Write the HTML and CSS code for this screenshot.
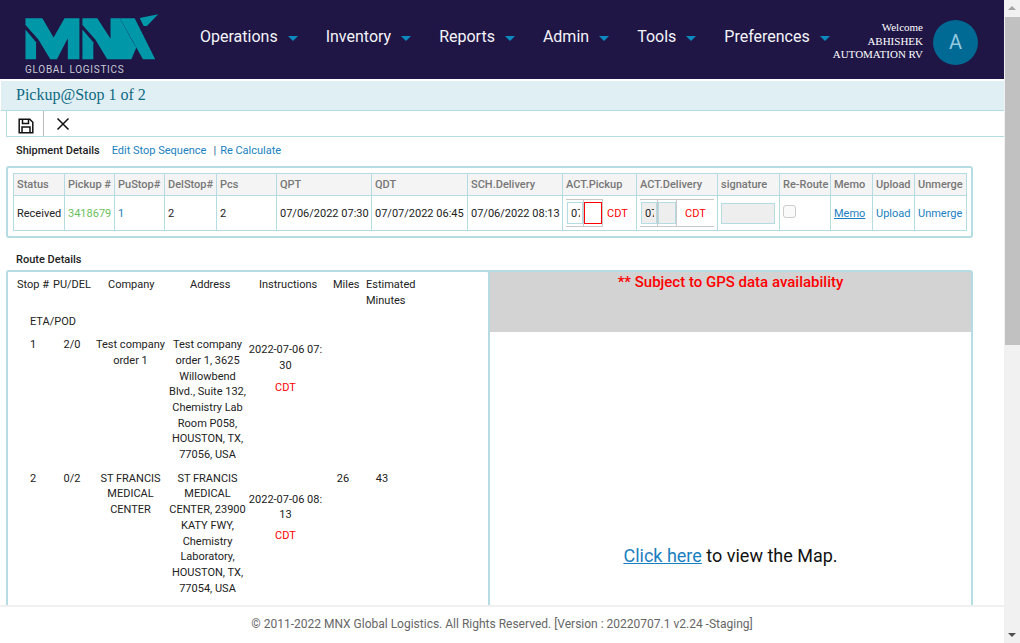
FILE: index.html
```html
<!DOCTYPE html>
<html lang="en">

<head>
    <meta charset="UTF-8">
    <meta name="viewport" content="width=device-width, initial-scale=1.0">
    <title>Pickup@Stop 1 of 2</title>

    <link rel="stylesheet" href="styles.css">

</head>

<body>
    <div class="app">
        <div class="page">
            <!-- Top navigation -->
            <header class="topbar">
                <div class="brand">
                    <svg class="brand-mark" viewBox="15 12 402 142" width="134" height="47">
                        <polygon points="15,62 47,100 47,152 15,152" />
                        <polygon points="15,28 66,28 100,86 133,28 178,28 178,152 143,152 143,88 110,152 90,152 54,92 15,48" />
                        <polygon points="187,62 220,100 220,152 187,152" />
                        <polygon points="187,28 232,28 272,90 272,28 300,28 340,100 350,116 335,152 262,152 226,92 187,48" />
                        <polygon points="300,28 345,28 407,152 370,152" />
                        <polygon points="360,27 416,16 382,51 372,51" />
                    </svg>
                    <span class="brand-name">GLOBAL LOGISTICS</span>
                </div>
                <nav class="menu">
                    <a class="menu-item">Operations<i class="caret"></i></a>
                    <a class="menu-item">Inventory<i class="caret"></i></a>
                    <a class="menu-item">Reports<i class="caret"></i></a>
                    <a class="menu-item">Admin<i class="caret"></i></a>
                    <a class="menu-item">Tools<i class="caret"></i></a>
                    <a class="menu-item">Preferences<i class="caret"></i></a>
                </nav>
                <div class="welcome">Welcome<br>ABHISHEK<br>AUTOMATION RV</div>
                <div class="avatar">A</div>
            </header>

            <main class="content">
                <div class="title-bar">Pickup@Stop 1 of 2</div>

                <div class="toolbar">
                    <button class="tool-btn tool-save" title="Save">
                        <svg viewBox="0 0 16 16" width="16" height="16" fill="none" stroke="#111" stroke-width="1.5">
                            <path d="M1.2 1.2h10.6l3 3v10.6H1.2z" />
                            <path d="M4.5 1.2v4.3h6V1.2" />
                            <path d="M4 14.8V9h8v5.8" />
                        </svg>
                    </button>
                    <button class="tool-btn tool-close" title="Close">
                        <svg viewBox="0 0 14 14" width="14" height="14" fill="none" stroke="#111" stroke-width="1.5">
                            <path d="M1.5 1.5l11 11M12.5 1.5l-11 11" />
                        </svg>
                    </button>
                </div>

                <div class="links-row">
                    <b class="label">Shipment Details</b>
                    <a class="link link-edit">Edit Stop Sequence</a>
                    <span class="link-sep">|</span>
                    <a class="link">Re Calculate</a>
                </div>

                <!-- Shipment table -->
                <section class="panel">
                    <table class="shipment">
                        <colgroup>
                            <col class="w51"><col class="w50"><col class="w50"><col class="w52"><col class="w60">
                            <col class="w95"><col class="w96"><col class="w95"><col class="w74"><col class="w81">
                            <col class="w62"><col class="w51"><col class="w42"><col class="w42"><col class="w52">
                        </colgroup>
                        <thead>
                            <tr>
                                <th>Status</th>
                                <th>Pickup #</th>
                                <th>PuStop#</th>
                                <th>DelStop#</th>
                                <th>Pcs</th>
                                <th>QPT</th>
                                <th>QDT</th>
                                <th>SCH.Delivery</th>
                                <th>ACT.Pickup</th>
                                <th>ACT.Delivery</th>
                                <th>signature</th>
                                <th>Re-Route</th>
                                <th>Memo</th>
                                <th>Upload</th>
                                <th>Unmerge</th>
                            </tr>
                        </thead>
                        <tbody>
                            <tr>
                                <td>Received</td>
                                <td class="green">3418679</td>
                                <td class="blue">1</td>
                                <td>2</td>
                                <td>2</td>
                                <td>07/06/2022 07:30</td>
                                <td>07/07/2022 06:45</td>
                                <td>07/06/2022 08:13</td>
                                <td>
                                    <div class="picker picker-pickup">
                                        <span class="cell cell-date"><input class="date-input" type="text" value="07/06/2022"></span>
                                        <span class="cell cell-time"><input class="time-input time-error" type="text"></span>
                                        <span class="zone">CDT</span>
                                    </div>
                                </td>
                                <td>
                                    <div class="picker picker-delivery">
                                        <span class="cell cell-date"><input class="date-input is-off" type="text" value="07/06/2022" disabled></span>
                                        <span class="cell cell-time"><input class="time-input is-off" type="text" disabled></span>
                                        <span class="zone">CDT</span>
                                    </div>
                                </td>
                                <td><input class="sign-input" type="text" disabled></td>
                                <td class="check-cell"><span class="check"></span></td>
                                <td><a class="memo">Memo</a></td>
                                <td class="blue">Upload</td>
                                <td class="blue">Unmerge</td>
                            </tr>
                        </tbody>
                    </table>
                </section>

                <h4 class="route-title">Route Details</h4>

                <section class="route">
                    <div class="route-list">
                        <div class="route-head">
                            <span>Stop #</span>
                            <span>PU/DEL</span>
                            <span>Company</span>
                            <span>Address</span>
                            <span>Instructions</span>
                            <span>Miles</span>
                            <span>Estimated<br>Minutes</span>
                        </div>
                        <div class="route-eta">ETA/POD</div>

                        <div class="stop">
                            <div>1</div>
                            <div>2/0</div>
                            <div>Test company order 1</div>
                            <div>Test company order 1, 3625 Willowbend Blvd., Suite 132, Chemistry Lab Room P058, HOUSTON, TX, 77056, USA</div>
                            <div class="when">2022-07-06 07:30<span class="zone">CDT</span></div>
                            <div></div>
                            <div></div>
                        </div>

                        <div class="stop">
                            <div>2</div>
                            <div>0/2</div>
                            <div>ST FRANCIS MEDICAL CENTER</div>
                            <div>ST FRANCIS MEDICAL CENTER, 23900 KATY FWY, Chemistry Laboratory, HOUSTON, TX, 77054, USA</div>
                            <div class="when when-low">2022-07-06 08:13<span class="zone">CDT</span></div>
                            <div>26</div>
                            <div>43</div>
                        </div>
                    </div>

                    <div class="route-map">
                        <div class="gps-note">** Subject to GPS data availability</div>
                        <div class="map-body"><span><a class="map-link">Click here</a> to view the Map.</span></div>
                    </div>
                </section>
            </main>

            <footer class="footer">© 2011-2022 MNX Global Logistics. All Rights Reserved. [Version : 20220707.1 v2.24 -Staging]</footer>
        </div>

        <!-- Window scrollbar -->
        <div class="scrollbar">
            <i class="arrow-up"></i>
            <div class="thumb"></div>
            <i class="arrow-down"></i>
        </div>
    </div>
</body>

</html>
```

FILE: styles.css
```css
* {
    box-sizing: border-box;
}

html,
body {
    margin: 0;
    height: 100%;
    overflow: hidden;
}

body {
    font-family: Roboto, "Liberation Sans", sans-serif;
    font-size: 11px;
    line-height: 1.42857;
    color: #222;
    background-color: #fff;
}

a {
    cursor: pointer;
}

.app {
    display: flex;
    height: 100vh;
}

.page {
    flex: 1;
    min-width: 0;
    display: flex;
    flex-direction: column;
}

/* header */
.topbar {
    flex: none;
    height: 79px;
    display: flex;
    align-items: flex-start;
    padding: 0 26px 0 25px;
    background-color: #1f1646;
    color: #fff;
}

.brand {
    width: 175px;
    padding-top: 13px;
    flex: none;
}

.brand-mark {
    display: block;
    fill: #0097a9;
}

.brand-name {
    display: block;
    margin-top: 4px;
    font-size: 10px;
    line-height: 12px;
    letter-spacing: 0.72px;
    color: #c9c9d4;
}

.menu {
    display: flex;
    gap: 28px;
    padding-top: 25px;
    flex: 1;
}

.menu-item {
    display: flex;
    align-items: center;
    font-size: 16px;
    line-height: 23px;
    color: #f4f4f8;
}

.caret {
    width: 0;
    height: 0;
    margin: 3px 0 0 10px;
    border-left: 5px solid transparent;
    border-right: 5px solid transparent;
    border-top: 5px solid #0d8ac0;
}

.welcome {
    margin: 21px 10px 0 0;
    font-family: "Liberation Serif", serif;
    font-size: 11px;
    line-height: 13.5px;
    text-align: right;
    white-space: nowrap;
}

.avatar {
    width: 45px;
    height: 45px;
    margin-top: 20px;
    border-radius: 50%;
    background-color: #006a94;
    color: #93c8e0;
    font-size: 20px;
    line-height: 45px;
    text-align: center;
}

/* page body */
.content {
    flex: 1;
    min-height: 0;
    overflow: hidden;
    padding-top: 2px;
}

.title-bar {
    height: 30px;
    margin-left: 1px;
    padding-left: 15px;
    background-color: #e0eff3;
    border-bottom: 1px solid #b5dce3;
    font-family: "Liberation Serif", serif;
    font-size: 16px;
    line-height: 28px;
    color: #0f6a84;
}

.toolbar {
    display: flex;
    height: 26px;
    margin-left: 6px;
    border-left: 1px solid #b5dce3;
    border-bottom: 1px solid #b5dce3;
}

.tool-btn {
    display: flex;
    padding: 0;
    border: none;
    background: none;
}

.tool-save {
    width: 37px;
    padding: 7px 0 0 11px;
    border-right: 1px solid #bbb;
}

.tool-close {
    padding: 6px 0 0 12px;
}

.links-row {
    display: flex;
    align-items: center;
    height: 29px;
    padding: 0 0 2px 16px;
}

.label {
    font-weight: 500;
    color: #222;
}

.link {
    color: #1a7fc0;
}

.link-edit {
    margin-left: 12px;
}

.link-sep {
    margin: 0 4px 0 7px;
    color: #1a5f90;
}

.panel {
    width: 967px;
    margin-left: 6px;
    padding: 5px;
    border: 2px solid #b5dce3;
    border-radius: 3px;
}

.shipment {
    width: 953px;
    table-layout: fixed;
    border-collapse: collapse;
}

.w42 { width: 42px; }
.w50 { width: 50px; }
.w51 { width: 51px; }
.w52 { width: 52px; }
.w60 { width: 60px; }
.w62 { width: 62px; }
.w74 { width: 74px; }
.w81 { width: 81px; }
.w95 { width: 95px; }
.w96 { width: 96px; }

.shipment th,
.shipment td {
    padding: 0 2px 0 3px;
    border: 1px solid #b5dce3;
    text-align: left;
    white-space: nowrap;
    overflow: hidden;
}

.shipment th {
    height: 22px;
    background-color: #f4f4f4;
    color: #777;
    font-weight: 500;
}

.shipment td {
    height: 35px;
    padding-top: 2px;
}

.green {
    color: #6cc05c;
}

.shipment .blue {
    color: #1a7fc0;
}

.memo {
    color: #1a7fc0;
    text-decoration: underline;
}

.zone {
    color: #f00;
}

.picker {
    display: flex;
    align-items: stretch;
    height: 28px;
    margin-top: -2px;
    border-top: 1px solid #c8c8c8;
    border-bottom: 1px solid #c8c8c8;
}

.picker-pickup {
    width: 37px;
}

.picker-delivery {
    width: 74px;
}

.cell {
    flex: none;
    display: flex;
    align-items: center;
    border-right: 1px solid #c8c8c8;
}

.cell-date {
    width: 18px;
    padding-left: 1px;
}

.cell-time {
    width: 19px;
}

.picker .zone {
    display: flex;
    align-items: center;
    flex: none;
    padding-top: 2px;
    margin-left: 4px;
}

.picker-delivery .zone {
    margin-left: 8px;
}

.date-input,
.time-input {
    flex: none;
    height: 22px;
    padding: 0 2px 0 3px;
    border: 1px solid #b5dce3;
    font: inherit;
    color: #222;
    background-color: #fff;
}

.date-input {
    width: 16px;
}

.time-input {
    width: 18px;
}

.time-error {
    border-color: #f00;
}

.is-off {
    background-color: #eee;
}

.sign-input {
    display: block;
    width: 54px;
    height: 21px;
    margin-top: -2px;
    border: 1px solid #b5dce3;
    background-color: #eee;
}

.shipment .check-cell {
    vertical-align: top;
    padding-top: 9px;
}

.check {
    display: block;
    width: 13px;
    height: 13px;
    border: 1px solid #ccc;
    border-radius: 3px;
    background-color: #fafafa;
}

.route-title {
    height: 32px;
    margin: 0;
    padding: 14px 0 0 16px;
    font-size: 11px;
    line-height: 16px;
    font-weight: 500;
}

.route {
    display: flex;
    width: 967px;
    margin-left: 6px;
}

.route-list {
    width: 484px;
    flex: none;
    padding: 5px 0 0 9px;
    border: 2px solid #b5dce3;
    border-bottom: none;
    border-radius: 3px 3px 0 0;
}

.route-head {
    display: grid;
    grid-template-columns: 36px 55px 82px 69px 74px 33px auto;
}

.route-eta {
    margin: 6px 0 7px 13px;
}

.stop {
    display: grid;
    grid-template-columns: 34px 44px 73px 81px 75px 40px 38px;
    margin-left: -1px;
    padding-bottom: 8px;
    text-align: center;
}

.when {
    padding-top: 5px;
    word-break: break-all;
}

.when-low {
    padding-top: 21px;
}

.when .zone {
    display: block;
    margin-top: 6px;
}

.when-low .zone {
    margin-top: 5px;
}

.route-map {
    flex: 1;
    margin-left: -2px;
    border: 2px solid #b5dce3;
    border-bottom: none;
    border-radius: 0 3px 0 0;
}

.gps-note {
    height: 60px;
    background-color: #d3d3d3;
    color: #f00;
    font-size: 15px;
    line-height: 20px;
    font-weight: 500;
    text-align: center;
}

.map-body {
    display: flex;
    align-items: center;
    justify-content: center;
    height: 448px;
    font-size: 18px;
    line-height: 26px;
    color: #111;
}

.map-link {
    color: #1a7fc0;
    text-decoration: underline;
}

.footer {
    flex: none;
    height: 38px;
    border-top: 2px solid #f0f0f0;
    background-color: #fff;
    color: #666;
    font-size: 12px;
    line-height: 34px;
    text-align: center;
}

/* scrollbar */
.scrollbar {
    flex: none;
    position: relative;
    width: 16px;
    background-color: #f1f1f1;
}

.thumb {
    width: 15px;
    height: 328px;
    margin: 17px 0 0 1px;
    background-color: #c1c1c1;
}

.arrow-up,
.arrow-down {
    position: absolute;
    left: 4px;
    width: 0;
    height: 0;
    border-left: 4px solid transparent;
    border-right: 4px solid transparent;
}

.arrow-up {
    top: 6px;
    border-bottom: 4px solid #a3a3a3;
}

.arrow-down {
    bottom: 6px;
    border-top: 4px solid #505050;
}
```
